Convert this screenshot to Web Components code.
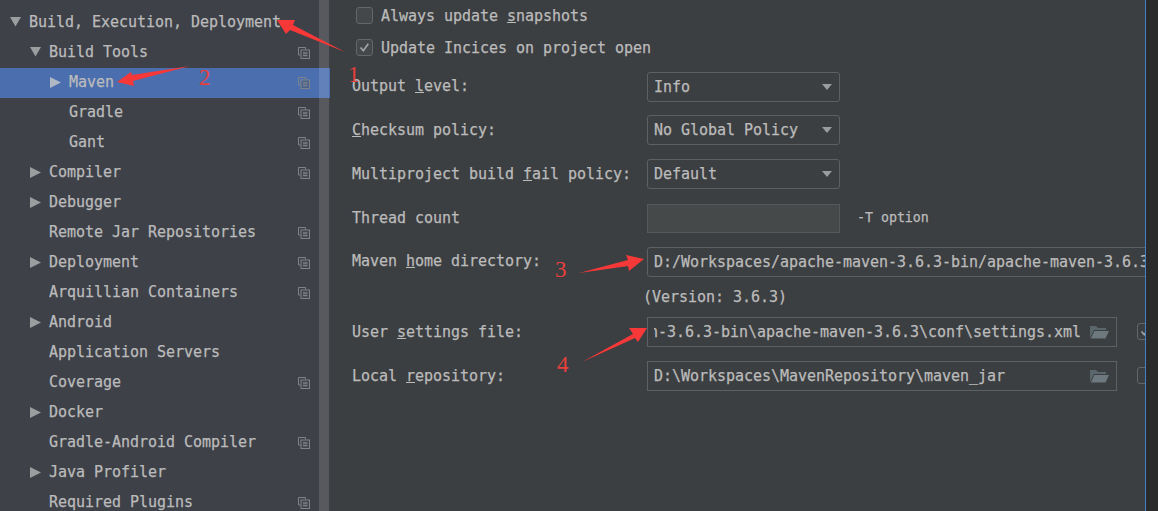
<!DOCTYPE html>
<html><head><meta charset="utf-8">
<style>
html,body{margin:0;padding:0;height:100%;overflow:hidden;background:#3c3f41}
body{font:15px/20px "DejaVu Sans Mono","Liberation Mono",monospace;color:#bbb;letter-spacing:-.03px;-webkit-text-stroke:.25px #bbb}
</style></head>
<body>
<settings-window>
  <nav-tree slot="tree">
    <tree-row depth="0" arrow="down">Build, Execution, Deployment</tree-row>
    <tree-row depth="1" arrow="down" copy>Build Tools</tree-row>
    <tree-row depth="2" arrow="right" copy selected>Maven</tree-row>
    <tree-row depth="2" copy>Gradle</tree-row>
    <tree-row depth="2" copy>Gant</tree-row>
    <tree-row depth="1" arrow="right" copy>Compiler</tree-row>
    <tree-row depth="1" arrow="right">Debugger</tree-row>
    <tree-row depth="1" copy>Remote Jar Repositories</tree-row>
    <tree-row depth="1" arrow="right" copy>Deployment</tree-row>
    <tree-row depth="1" copy>Arquillian Containers</tree-row>
    <tree-row depth="1" arrow="right">Android</tree-row>
    <tree-row depth="1">Application Servers</tree-row>
    <tree-row depth="1" copy>Coverage</tree-row>
    <tree-row depth="1" arrow="right">Docker</tree-row>
    <tree-row depth="1" copy>Gradle-Android Compiler</tree-row>
    <tree-row depth="1" arrow="right">Java Profiler</tree-row>
    <tree-row depth="1" copy>Required Plugins</tree-row>
  </nav-tree>
  <maven-form slot="form">
    <check-row>Always update <u>s</u>napshots</check-row>
    <check-row checked>Update Incices on project open</check-row>
    <form-row class="first"><span slot="label">Output <u>l</u>evel:</span><combo-box>Info</combo-box></form-row>
    <form-row><span slot="label"><u>C</u>hecksum policy:</span><combo-box>No Global Policy</combo-box></form-row>
    <form-row><span slot="label">Multiproject build <u>f</u>ail policy:</span><combo-box>Default</combo-box></form-row>
    <form-row><span slot="label">Thread count</span><thread-field>-T option</thread-field></form-row>
    <form-row><span slot="label">Maven <u>h</u>ome directory:</span><path-field wide>D:/Workspaces/apache-maven-3.6.3-bin/apache-maven-3.6.3/</path-field></form-row>
    <version-line>(Version: 3.6.3)</version-line>
    <form-row><span slot="label">User <u>s</u>ettings file:</span><path-field folder end tick="on">D:\Workspaces\apache-maven-3.6.3-bin\apache-maven-3.6.3\conf\settings.xml</path-field></form-row>
    <form-row><span slot="label">Local <u>r</u>epository:</span><path-field folder tick="off">D:\Workspaces\MavenRepository\maven_jar</path-field></form-row>
  </maven-form>
  <note-layer slot="notes"></note-layer>
</settings-window>
<script>
const def=(name,html,cls)=>{
  const t=document.createElement('template');t.innerHTML=html;
  customElements.define(name,class extends HTMLElement{
    constructor(){super();this.attachShadow({mode:'open'}).appendChild(t.content.cloneNode(true));}
    connectedCallback(){cls&&cls.call(this,this.shadowRoot);}
  });
};
const copyIcon=`<svg width="12" height="12" viewBox="0 0 12 12" fill="none" stroke="#7f8389" stroke-width="1"><path d="M7.5 2.500V.5H.5v7.500h2"/><rect x="3" y="3" width="8.5" height="8.5" fill="#4a4d52" fill-opacity=".35"/><path d="M5 6h4.500M5 8.500h4.500" stroke-width="1.4"/></svg>`;
const folder=`<svg width="20" height="14" viewBox="0 0 20 14"><path d="M1 13V1h6l2 2h8v2H5L1 13z" fill="#59666b"/><path d="M5.500 6H20l-3.500 7.500H1.800z" fill="#6d797e"/></svg>`;
const tick='<svg width="15" height="15" viewBox="0 0 15 15"><path d="M3.500 7.500l2.800 3.200 5-7" fill="none" stroke="#a5a7a8" stroke-width="1.600"/></svg>';

def('settings-window',`<style>
:host{display:flex;width:1158px;height:511px;overflow:hidden;position:relative}
.tree{flex:0 0 330px;display:block;height:100%}
.form{flex:0 0 815px;height:100%;overflow:hidden;border-right:1px solid #3d85c6;width:815px}
.rest{flex:1;background:#2b2b2b}
</style>
<div class="tree"><slot name="tree"></slot></div>
<div class="form"><slot name="form"></slot></div>
<div class="rest"></div>
<slot name="notes"></slot>`);

def('nav-tree',`<style>
:host{display:block;position:relative;width:330px;height:511px;background:#3e4148;overflow:hidden}
.list{padding-top:8px}
.bar{position:absolute;left:319px;top:0;width:10px;height:100%;background:rgba(255,255,255,.13)}
</style><div class="list"><slot></slot></div><div class="bar"></div>`);

def('tree-row',`<style>
:host{display:flex;align-items:center;height:30px;position:relative;box-sizing:border-box;white-space:pre}
:host([selected]){background:#4b6eaf}
.a{width:18px;flex:none;display:flex;justify-content:flex-start;margin-top:-2px}
.t{flex:1;margin-top:-2px;margin-left:1px}
.i{position:absolute;left:298px;top:9px;line-height:0}
svg{display:block}
</style><span class="a"></span><span class="t"><slot></slot></span><span class="i"></span>`,function(r){
  const d=+this.getAttribute('depth')||0;
  this.style.paddingLeft=(10+d*20)+'px';
  const a=this.getAttribute('arrow');
  const el=r.querySelector('.a');
  if(a==='down')el.innerHTML='<svg width="11" height="10" viewBox="0 0 11 10"><path d="M0 0h11L5.500 9.500z" fill="#9b9d9f"/></svg>';
  if(a==='right')el.innerHTML='<svg width="11" height="11" viewBox="0 0 11 11"><path d="M0 0l11 5.500L0 11z" fill="#9b9d9f"/></svg>';
  if(this.hasAttribute('copy'))r.querySelector('.i').innerHTML=copyIcon;
  if(this.hasAttribute('selected'))r.querySelector('.a path').setAttribute('fill','#b0b8c4');
});

def('maven-form',`<style>
:host{display:block;box-sizing:border-box;height:511px;padding:0 0 0 22px;background:#3c3f41;overflow:hidden}
</style><slot></slot>`);

def('check-row',`<style>
:host{display:flex;align-items:center;height:32px;margin-left:4px;white-space:pre}
:host(:first-child){margin-top:-1px}
.b{width:15px;height:15px;border:1px solid #63676a;border-radius:3px;background:#45484a;margin-right:8px;flex:none;line-height:0}
.t{margin-top:1px}
</style><span class="b"></span><span class="t"><slot></slot></span>`,function(r){
  if(this.hasAttribute('checked'))r.querySelector('.b').innerHTML=tick;
});

def('form-row',`<style>
:host{display:flex;align-items:center;height:29.85px;margin-bottom:14px;white-space:pre}
:host(.first){margin-top:8.7px}
.l{flex:0 0 295px;margin-top:-1px}
.f{flex:1;display:flex;min-width:0}
</style><span class="l"><slot name="label"></slot></span><span class="f"><slot></slot></span>`);

const fieldCss=`:host{display:flex;align-items:center;box-sizing:border-box;height:30px;border:1px solid #5e6163;white-space:pre;overflow:hidden}`;
def('combo-box',`<style>${fieldCss}
:host{width:193px;border-radius:3px;padding:0 7px 0 6px;justify-content:space-between;background:#3c3f41}
i{width:0;height:0;border:5.5px solid transparent;border-top:6px solid #9a9c9e;border-bottom:0;flex:none}
</style><slot></slot><i></i>`);

def('thread-field',`<style>
:host{display:flex;align-items:center;white-space:pre}
.b{width:193px;height:29px;box-sizing:border-box;background:#45494a;border:1px solid #55595b;margin-right:17px}
.h{font-size:13.3px}
</style><span class="b"></span><span class="h"><slot></slot></span>`);

def('path-field',`<style>
:host{display:flex;align-items:center;white-space:pre;flex:none}
.box{display:flex;align-items:center;box-sizing:border-box;height:30px;width:470px;border:1px solid #5e6163;padding:0 7px 0 6px;background:#3c3f41}
:host([wide]) .box{width:600px;border-radius:3px 0 0 3px}
.clip{flex:1;min-width:0;overflow:hidden;display:flex}
:host([end]) .clip{justify-content:flex-end}
.fo{margin-left:8px;flex:none;line-height:0}
.tick{width:15px;height:15px;border:1px solid #63676a;border-radius:3px;margin-left:20px;flex:none;margin-top:-2px;line-height:0}
:host([wide]) .fo{display:none}
</style><span class="box"><span class="clip"><span><slot></slot></span></span><span class="fo"></span></span><span class="tick"></span>`,function(r){
  if(this.hasAttribute('folder'))r.querySelector('.fo').innerHTML=folder;
  else r.querySelector('.tick').style.display='none';
  if(this.getAttribute('tick')==='on')r.querySelector('.tick').innerHTML=tick;
});

def('version-line',`<style>:host{display:block;height:31.5px;margin:-5px 0 0 291px;line-height:22px;white-space:pre}</style><slot></slot>`);

def('note-layer',`<style>
:host{position:absolute;inset:0;pointer-events:none;display:block;-webkit-text-stroke:0}
svg{position:absolute;left:0;top:0}
b{position:absolute;font:400 23px/24px "Liberation Serif",serif;color:#e8403c;-webkit-text-stroke:0}
</style>
<svg width="1158" height="511" viewBox="0 0 1158 511"><g fill="#f73838">
<path d="M277 20L295 20L293 25L345 52L290 30L286 34z"/>
<path d="M117 82L131 72L132 75L190 66L133 81L134 86z"/>
<path d="M644 259L626 255L628 260L579 273L628 266L629 271z"/>
<path d="M647 328L629 328L633 334L582 362L635 338L638 342z"/>
</g></svg>
<b style="left:348px;top:63px">1</b><b style="left:199px;top:66px">2</b><b style="left:555px;top:258px">3</b><b style="left:557px;top:353px">4</b>`);
</script>
</body></html>
